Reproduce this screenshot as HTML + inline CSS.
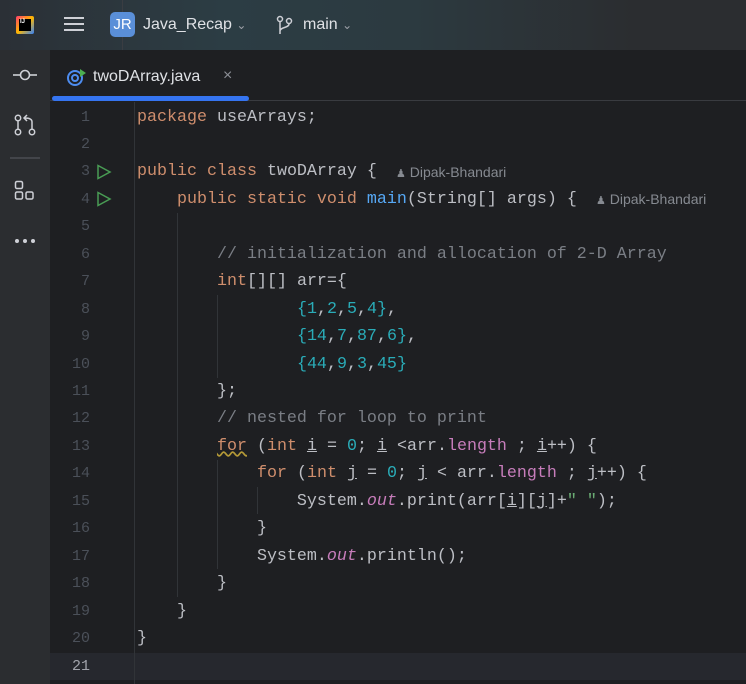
<!DOCTYPE html>
<html><head><meta charset="utf-8"><style>
*{margin:0;padding:0;box-sizing:border-box}
body{width:746px;height:684px;background:#1e1f22;overflow:hidden;position:relative;font-family:"Liberation Sans",sans-serif}
#top{position:absolute;left:0;top:0;width:746px;height:50px;background:linear-gradient(90deg,#2b3036 0%,#2c3d44 30%,#2c3a40 55%,#2b2d30 85%)}
#side{position:absolute;left:0;top:50px;width:50px;height:634px;background:#2b2d30}
#tabs{position:absolute;left:50px;top:50px;width:696px;height:51px;background:#1e1f22;border-bottom:1px solid #393b40}
.code{position:absolute;left:0;top:0;font-family:"Liberation Mono",monospace;font-size:16.67px;color:#bcbec4;white-space:pre}
.ln{position:absolute;width:40px;left:50px;text-align:right;font-family:"Liberation Mono",monospace;font-size:15px;color:#4b5059}
.l{position:absolute;left:137px;height:27.45px;line-height:27.45px}
.k{color:#cf8e6d}.n{color:#2aacb8}.c{color:#7a7e85}.p{color:#c77dbb}.s{color:#6aab73}.i{font-style:italic}
.u{text-decoration:underline}
.g{position:absolute;width:1px;background:#313438}
.hint{position:absolute;font-family:"Liberation Sans",sans-serif;font-size:14px;color:#868a91}
</style></head><body>
<div id="top">
 <div style="position:absolute;left:16px;top:16px;width:18px;height:18px;background:linear-gradient(135deg,#ff3d6e,#ffb800 50%,#2f80ff);border-radius:2px"><div style="position:absolute;left:3px;top:3px;width:12px;height:12px;background:#000;color:#fff;font-size:6px;font-weight:bold;line-height:7px;padding-left:1px">IJ</div></div>
 <div style="position:absolute;left:64px;top:17px;width:20px;height:2px;background:#ced0d6;box-shadow:0 6px 0 #ced0d6,0 12px 0 #ced0d6"></div>
 <div style="position:absolute;left:122px;top:0;width:1px;height:50px;background:#3a3d42"></div>
 <div style="position:absolute;left:110px;top:12px;width:25px;height:25px;border-radius:5px;background:#5a8fd8;color:#fff;font-size:15px;text-align:center;line-height:25px">JR</div>
 <div style="position:absolute;left:143px;top:16px;color:#dfe1e5;font-size:16px">Java_Recap <span style="color:#9da0a8;font-size:12px">&#8964;</span></div>
 <svg style="position:absolute;left:276px;top:15px" width="18" height="20" viewBox="0 0 18 20" fill="none" stroke="#ced0d6" stroke-width="1.5"><circle cx="4" cy="4" r="2.5"/><circle cx="13" cy="6" r="2.5"/><path d="M4 7v12M13 9c0 4-9 3-9 7"/></svg>
 <div style="position:absolute;left:303px;top:16px;color:#dfe1e5;font-size:16px">main <span style="color:#9da0a8;font-size:12px">&#8964;</span></div>
</div>
<div id="side">
 <svg style="position:absolute;left:12px;top:17px" width="26" height="16" fill="none" stroke="#ced0d6" stroke-width="1.6"><line x1="1" y1="8" x2="8" y2="8"/><circle cx="13" cy="8" r="4.5"/><line x1="18" y1="8" x2="25" y2="8"/></svg>
 <svg style="position:absolute;left:14px;top:64px" width="24" height="24" fill="none" stroke="#ced0d6" stroke-width="1.5"><circle cx="4" cy="4" r="2.7"/><circle cx="4" cy="18" r="2.7"/><circle cx="18" cy="18" r="2.7"/><path d="M4 7v8M18 15V8c0-3-3-4-7-4M13 1l-3 3 3 3"/></svg>
 <div style="position:absolute;left:10px;top:107px;width:30px;height:2px;background:#43454a"></div>
 <svg style="position:absolute;left:14px;top:130px" width="22" height="22" fill="none" stroke="#ced0d6" stroke-width="1.5"><rect x="1.5" y="1.5" width="7" height="7" rx="1.5"/><rect x="1.5" y="12" width="7" height="7" rx="1.5"/><rect x="12" y="12" width="7" height="7" rx="1.5"/></svg>
 <div style="position:absolute;left:15px;top:189px;width:4px;height:4px;border-radius:2px;background:#ced0d6;box-shadow:8px 0 0 #ced0d6,16px 0 0 #ced0d6"></div>
</div>
<div id="tabs">
 <svg style="position:absolute;left:17px;top:18px" width="20" height="19" fill="none"><circle cx="8" cy="10" r="7" stroke="#4d8cf0" stroke-width="2"/><circle cx="8" cy="10" r="3" stroke="#4d8cf0" stroke-width="2"/><path d="M13 1l6 4-6 4z" fill="#4caf50"/></svg>
 <div style="position:absolute;left:43px;top:18px;color:#dfe1e5;font-size:16px">twoDArray.java</div>
 <div style="position:absolute;left:173px;top:17px;color:#8c8f96;font-size:16px">×</div>
 <div style="position:absolute;left:2px;top:46px;width:197px;height:5px;border-radius:3px;background:#3574f0"></div>
</div>
<div style="position:absolute;left:50px;top:652.5px;width:696px;height:27.5px;background:#26282e"></div>
<div style="position:absolute;left:134px;top:102px;width:1px;height:582px;background:#313438"></div>
<div class="g" style="left:177px;top:213px;height:384px"></div>
<div class="g" style="left:217px;top:295px;height:83px"></div>
<div class="g" style="left:217px;top:460px;height:109px"></div>
<div class="g" style="left:257px;top:487px;height:27px"></div>
<svg style="position:absolute;left:96px;top:164px" width="16" height="16" fill="none" stroke="#499c54" stroke-width="1.5"><path d="M2 1.5L14 8 2 14.5z"/></svg>
<svg style="position:absolute;left:96px;top:191px" width="16" height="16" fill="none" stroke="#499c54" stroke-width="1.5"><path d="M2 1.5L14 8 2 14.5z"/></svg>
<div class="code">
<div class="l" style="top:103.5px"><span class="k">package</span> useArrays;</div>
<div class="l" style="top:158.4px"><span class="k">public class</span> twoDArray {</div>
<div class="l" style="top:185.85px">    <span class="k">public static void</span> <span style="color:#56a8f5">main</span>(String[] args) {</div>
<div class="l" style="top:240.75px">        <span class="c">// initialization and allocation of 2-D Array</span></div>
<div class="l" style="top:268.2px">        <span class="k">int</span>[][] arr={</div>
<div class="l" style="top:295.65px">                <span class="n">{</span><span class="n">1</span>,<span class="n">2</span>,<span class="n">5</span>,<span class="n">4</span><span class="n">}</span>,</div>
<div class="l" style="top:323.1px">                <span class="n">{</span><span class="n">14</span>,<span class="n">7</span>,<span class="n">87</span>,<span class="n">6</span><span class="n">}</span>,</div>
<div class="l" style="top:350.55px">                <span class="n">{</span><span class="n">44</span>,<span class="n">9</span>,<span class="n">3</span>,<span class="n">45</span><span class="n">}</span></div>
<div class="l" style="top:378px">        };</div>
<div class="l" style="top:405.45px">        <span class="c">// nested for loop to print</span></div>
<div class="l" style="top:432.9px">        <span class="k" style="text-decoration:underline wavy #b59a37">for</span> (<span class="k">int</span> <span class="u">i</span> = <span class="n">0</span>; <span class="u">i</span> &lt;arr.<span class="p">length</span> ; <span class="u">i</span>++) {</div>
<div class="l" style="top:460.35px">            <span class="k">for</span> (<span class="k">int</span> <span class="u">j</span> = <span class="n">0</span>; <span class="u">j</span> &lt; arr.<span class="p">length</span> ; <span class="u">j</span>++) {</div>
<div class="l" style="top:487.8px">                System.<span class="p i">out</span>.print(arr[<span class="u">i</span>][<span class="u">j</span>]+<span class="s">" "</span>);</div>
<div class="l" style="top:515.25px">            }</div>
<div class="l" style="top:542.7px">            System.<span class="p i">out</span>.println();</div>
<div class="l" style="top:570.15px">        }</div>
<div class="l" style="top:597.6px">    }</div>
<div class="l" style="top:625.05px">}</div>
</div>
<div class="hint" style="left:396px;top:164px"><span style="font-size:11px">&#9823;</span> Dipak-Bhandari</div>
<div class="hint" style="left:596px;top:191px"><span style="font-size:11px">&#9823;</span> Dipak-Bhandari</div>
<div class="ln" style="top:103.5px;line-height:27.45px">1<br>2<br>3<br>4<br>5<br>6<br>7<br>8<br>9<br>10<br>11<br>12<br>13<br>14<br>15<br>16<br>17<br>18<br>19<br>20<br><span style="color:#a1a3ab">21</span></div>
</body></html>
